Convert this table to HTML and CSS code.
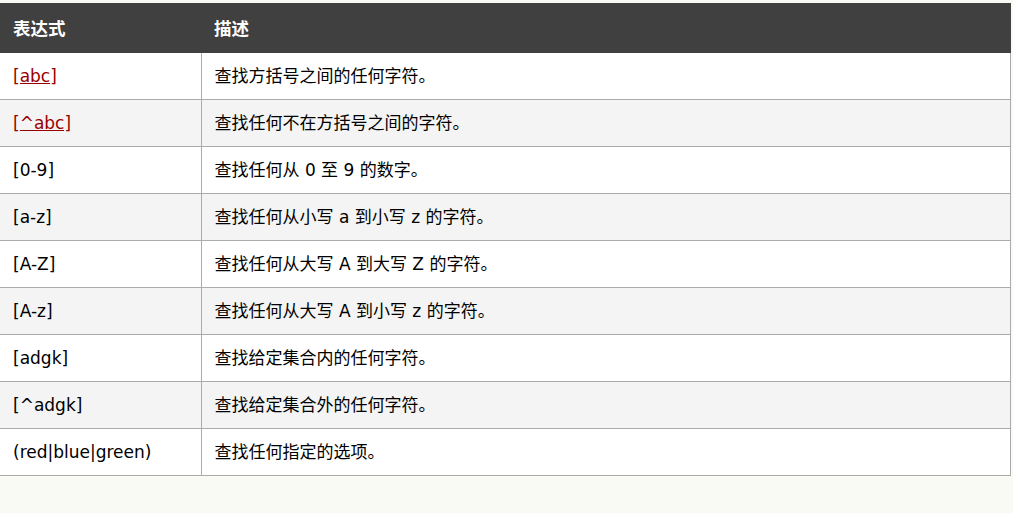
FILE: index.html
```html
<!DOCTYPE html>
<html lang="zh-CN">
<head>
<meta charset="utf-8">
<title>正则表达式 方括号</title>
<link rel="stylesheet" href="styles.css">
</head>
<body>
<table class="reference">
  <thead>
    <tr><th class="col-expr">表达式</th><th>描述</th></tr>
  </thead>
  <tbody>
    <tr><td><a href="#">[abc]</a></td><td>查找方括号之间的任何字符。</td></tr>
    <tr><td><a href="#">[^abc]</a></td><td>查找任何不在方括号之间的字符。</td></tr>
    <tr><td>[0-9]</td><td>查找任何从 0 至 9 的数字。</td></tr>
    <tr><td>[a-z]</td><td>查找任何从小写 a 到小写 z 的字符。</td></tr>
    <tr><td>[A-Z]</td><td>查找任何从大写 A 到大写 Z 的字符。</td></tr>
    <tr><td>[A-z]</td><td>查找任何从大写 A 到小写 z 的字符。</td></tr>
    <tr><td>[adgk]</td><td>查找给定集合内的任何字符。</td></tr>
    <tr><td>[^adgk]</td><td>查找给定集合外的任何字符。</td></tr>
    <tr><td>(red|blue|green)</td><td>查找任何指定的选项。</td></tr>
  </tbody>
</table>
</body>
</html>
```
FILE: styles.css
```css
html, body {
  margin: 0;
  padding: 0;
  background: #fafaf5;
}
body {
  padding-top: 3px;
  font-family: "DejaVu Sans", "Noto Sans CJK SC", sans-serif;
  font-size: 17px;
  color: #000;
}
.reference {
  border-collapse: collapse;
  width: 1011px;
  background: #fff;
}
.reference th {
  background: #404040;
  color: #fff;
  font-weight: bold;
  text-align: left;
  height: 50px;
  padding: 0 13px 2px 13px;
  box-sizing: border-box;
  border: none;
  font-family: "Noto Sans CJK SC", sans-serif;
  font-size: 17.5px;
}
.reference .col-expr {
  width: 201px;
}
.reference td {
  height: 46px;
  padding: 0 12px 0 13px;
  border-top: 1px solid #ababab;
  border-bottom: 1px solid #ababab;
  border-right: 1px solid #ababab;
  vertical-align: middle;
  line-height: 24px;
}
.reference tbody tr:first-child td {
  border-top: none;
}
.reference tbody tr:nth-child(even) td {
  background: #f4f4f4;
}
.reference a {
  color: #990000;
  text-decoration: underline;
}
```
